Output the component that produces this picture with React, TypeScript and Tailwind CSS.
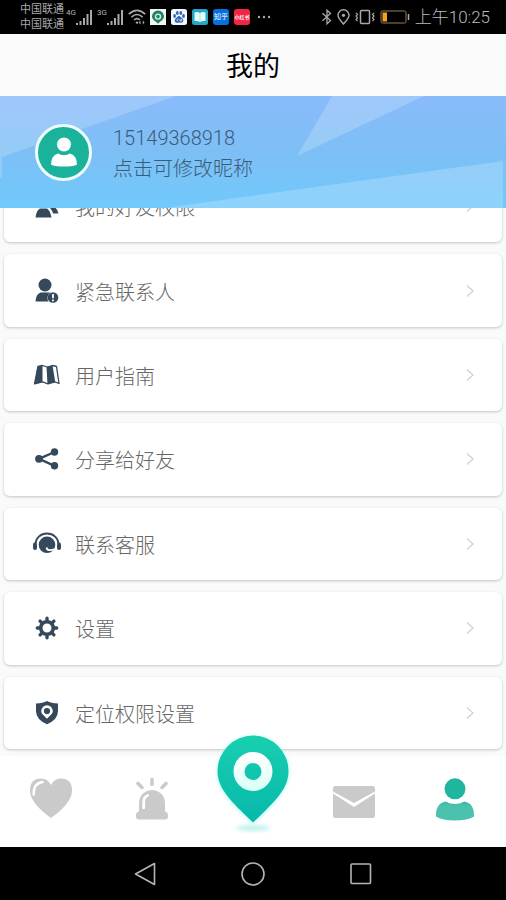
import type { ReactNode } from "react";

function Signal({ label }: { label: string }) {
  return (
    <div className="flex h-5 items-start">
      <span className="w-[10px] text-[8px] leading-[12px] text-[#b4b4b4]">{label}</span>
      <svg width="17" height="16" viewBox="0 0 17 16" className="mt-[3px]" fill="#a9a9a9" aria-hidden="true">
        <rect x="0" y="13" width="2" height="2" />
        <rect x="3.5" y="11" width="2" height="4" />
        <rect x="7" y="8" width="2" height="7" />
        <rect x="10.5" y="4" width="2" height="11" />
        <rect x="14" y="0" width="2" height="15" />
      </svg>
    </div>
  );
}

function StatusBar() {
  return (
    <div className="flex h-[34px] shrink-0 items-center justify-between bg-black pl-5 pr-4 text-[#a9a9a9]">
      <div className="flex items-center gap-1">
        <div className="-mr-[2px] text-[11px] leading-[15px]">
          <p>中国联通</p>
          <p>中国联通</p>
        </div>
        <Signal label="4G" />
        <Signal label="3G" />
        <svg width="18" height="18" viewBox="0 0 18 18" fill="none" stroke="#a9a9a9" strokeWidth="1.6" aria-hidden="true">
          <path d="M.8 6.2Q9-1.6 17.2 6.2M3.4 9.2Q9 3.8 14.6 9.2M6 12Q9 9.2 12 12" />
          <circle cx="9" cy="14.6" r="1.2" fill="#a9a9a9" stroke="none" />
          <path d="m12.5 12.5-1.8 2 1.8 2zM14.8 12.5l1.8 2-1.8 2z" fill="#a9a9a9" stroke="none" />
        </svg>
        <div className="flex items-center gap-[5px]">
          <svg width="16" height="16" viewBox="0 0 16 16" aria-hidden="true">
            <rect width="16" height="16" fill="#f2f7f3" />
            <path d="M8 1.6a6 6 0 0 1 6 6c0 2.600-2.400 4-6 7.200-3.600-3.200-6-4.600-6-7.200a6 6 0 0 1 6-6z" fill="#238463" />
            <circle cx="8" cy="7.6" r="2.5" fill="none" stroke="#d5eee4" strokeWidth="1.4" />
          </svg>
          <svg width="16" height="16" viewBox="0 0 16 16" aria-hidden="true">
            <rect width="16" height="16" rx="2.5" fill="#f3f6fb" />
            <g fill="#3468ba">
              <ellipse cx="3.6" cy="7" rx="1.4" ry="1.9" />
              <ellipse cx="6.3" cy="4" rx="1.4" ry="1.9" />
              <ellipse cx="9.8" cy="4" rx="1.4" ry="1.9" />
              <ellipse cx="12.5" cy="7" rx="1.4" ry="1.9" />
              <path d="M8 7c1.600 0 2.100 1.600 3.300 2.600 1.600 1.300 1.300 4-.8 4.100-1 0-1.600-.3-2.500-.3s-1.500.3-2.500.3c-2.100-.1-2.400-2.800-.8-4.100C5.900 8.600 6.400 7 8 7z" />
            </g>
            <path d="M6.200 10.300v1.800M7.600 10.300h-1.400M9 10v2.100h1.500V10" stroke="#f3f6fb" strokeWidth=".7" fill="none" />
          </svg>
          <svg width="16" height="16" viewBox="0 0 16 16" aria-hidden="true">
            <rect width="16" height="16" rx="2.5" fill="#27a6c4" />
            <path d="M2.500 3.500Q5.500 2.500 8 4q2.500-1.500 5.500-.5v8.500Q10.500 11.500 8 13q-2.500-1.500-5.500-1z" fill="#e5f8fa" />
            <path d="M8 4v9" stroke="#9bd7e0" strokeWidth=".7" />
          </svg>
          <span className="flex size-4 items-center justify-center overflow-hidden rounded-[3px] bg-[#0670df] text-[7px] leading-4 text-white">知乎</span>
          <span className="flex size-4 items-center justify-center overflow-hidden rounded-[3px] bg-[#f32444] text-[5px] font-bold leading-4 text-white">小红书</span>
          <svg width="16" height="4" viewBox="0 0 16 4" fill="#a9a9a9" aria-hidden="true">
            <circle cx="4" cy="2" r="1.200" />
            <circle cx="9" cy="2" r="1.200" />
            <circle cx="14" cy="2" r="1.200" />
          </svg>
        </div>
      </div>
      <div className="flex items-center gap-[5px]">
        <svg width="10" height="16" viewBox="0 0 10 16" fill="none" stroke="#a9a9a9" strokeWidth="1.300" aria-hidden="true">
          <path d="m.5 4.200 8 7.300L5 14.800V1.200l3.500 3.300-8 7.300" />
        </svg>
        <svg width="13" height="16" viewBox="0 0 13 16" fill="none" stroke="#a9a9a9" strokeWidth="1.400" aria-hidden="true">
          <path d="M6.500 15C3.500 11.500 1 9.300 1 6.300a5.500 5.500 0 0 1 11 0c0 3-2.500 5.200-5.500 8.700z" />
          <circle cx="6.500" cy="6.300" r="1.600" fill="#a9a9a9" stroke="none" />
        </svg>
        <svg width="20" height="16" viewBox="0 0 20 16" fill="none" stroke="#a9a9a9" strokeWidth="1.500" aria-hidden="true">
          <rect x="5.500" y="1.500" width="9" height="13" rx="1" />
          <path d="M1 4l1.500 1.300L1 7l1.500 1.700L1 10.400l1.500 1.600M19 4l-1.500 1.300L19 7l-1.500 1.700 1.500 1.700-1.500 1.600" strokeWidth="1.200" />
        </svg>
        <svg width="30" height="14" viewBox="0 0 30 14" aria-hidden="true">
          <rect x="1" y="1" width="25" height="12" rx="1.500" fill="none" stroke="#9b7d58" />
          <rect x="2.500" y="2.500" width="4.500" height="9" fill="#f5a023" />
          <path d="M28.500 4v6" stroke="#a9a9a9" strokeWidth="1.500" />
        </svg>
        <time className="whitespace-nowrap text-[17px] font-light leading-5 text-[#bcbcbc]">上午10:25</time>
      </div>
    </div>
  );
}

function RowIcon({ children }: { children: ReactNode }) {
  return (
    <svg width="30" height="28" viewBox="0 0 30 28" fill="#35495b" className="shrink-0" aria-hidden="true">
      {children}
    </svg>
  );
}

const rows: { label: string; icon: ReactNode }[] = [
  {
    label: "我的好友权限",
    icon: (
      <>
        <circle cx="12" cy="8" r="6" />
        <path d="M3.500 25.500Q4.500 18 8 16.500h7q3 1.500 4.500 9z" />
        <circle cx="20" cy="9" r="5" />
        <path d="M17 15h5q3.500 1.500 4.500 6.500h-5.500q-1-4-4-6.500z" />
      </>
    ),
  },
  {
    label: "紧急联系人",
    icon: (
      <>
        <circle cx="13" cy="8" r="6.500" />
        <path d="M3.500 24.500q.5-7.500 5-9h10q-3 2-3 5.500 0 2 1 3.500z" />
        <circle cx="21" cy="20.500" r="5.300" />
        <path d="M21 17v4.200M21 22.500v1.700" stroke="white" strokeWidth="1.800" />
      </>
    ),
  },
  {
    label: "用户指南",
    icon: (
      <>
        <path d="M5.500 5.500 10.500 4.300v16.500L2.500 23z" />
        <path d="m14.500 6 6-1.700 2.700 16.500L15.500 23z" />
        <path d="M6 5.500 10.500 4.500 15.500 6l5-1.500 4 1L27 22.500l-4-1.700-7 2-5.500-2-8 2z" fill="none" stroke="#35495b" strokeWidth="1.300" strokeLinejoin="round" />
      </>
    ),
  },
  {
    label: "分享给好友",
    icon: (
      <>
        <path d="M22.500 7 7 13.800 22.500 20.800" fill="none" stroke="#35495b" strokeWidth="2.400" />
        <circle cx="22.500" cy="7" r="3.700" />
        <circle cx="7" cy="13.800" r="3.900" />
        <circle cx="22.500" cy="20.800" r="3.700" />
      </>
    ),
  },
  {
    label: "联系客服",
    icon: (
      <>
        <path d="M3.500 14A11.500 10.500 0 0 1 26.500 14" fill="none" stroke="#35495b" strokeWidth="1.800" />
        <rect x="1" y="12.500" width="4" height="7.500" rx="2" />
        <rect x="25" y="12.500" width="4" height="7.500" rx="2" />
        <circle cx="15" cy="14.800" r="8.300" />
        <path d="M14.500 17.500q.5 3 4 2.600l6.500-1.300" fill="none" stroke="white" strokeWidth="1.800" />
      </>
    ),
  },
  {
    label: "设置",
    icon: (
      <>
        <path d="M15 4.300V7M15 21v2.700M5.300 14H8M22 14h2.700M8.100 7.100l2 2M19.900 18.900l2 2M21.900 7.100l-2 2M10.100 18.900l-2 2" stroke="#35495b" strokeWidth="3.400" strokeLinecap="round" />
        <circle cx="15" cy="14" r="6.300" fill="white" stroke="#35495b" strokeWidth="3.600" />
      </>
    ),
  },
  {
    label: "定位权限设置",
    icon: (
      <>
        <path d="M15 2Q19 4.300 26 4.500V12q0 8.500-11 13.300Q4 20.500 4 12V4.500Q11 4.300 15 2z" />
        <path d="M15 6.300a5.800 5.800 0 0 1 5.800 5.800c0 2.700-2.300 4.100-5.800 7.600-3.500-3.500-5.800-4.900-5.800-7.600A5.800 5.800 0 0 1 15 6.300z" fill="white" />
        <circle cx="15" cy="12" r="3.100" />
      </>
    ),
  },
];

function MenuRow({ label, icon }: { label: string; icon: ReactNode }) {
  return (
    <li className="flex">
      <button className="flex w-full items-center rounded-md bg-white pl-7 pr-[27px] text-left shadow-[0_1px_3px_rgba(0,0,0,0.22)]">
        <RowIcon>{icon}</RowIcon>
        <span className="ml-[13px] flex-1 pt-1 text-[20px] font-light leading-7 text-[#666]">{label}</span>
        <svg width="10" height="14" viewBox="0 0 10 14" fill="none" stroke="#d2d2d2" strokeWidth="1.300" aria-hidden="true">
          <path d="m2 1.500 6 5.500-6 5.500" />
        </svg>
      </button>
    </li>
  );
}

function Profile() {
  return (
    <section className="relative z-10 flex h-28 shrink-0 items-center bg-linear-to-b from-[#89bbfa] via-[#7dbff5] to-[#70c9fc] pl-[35px]">
      <svg className="absolute inset-0 size-full" viewBox="0 0 506 112" preserveAspectRatio="none" aria-hidden="true">
        <path d="M0 0H176L2 61V81L0 82z" fill="white" fillOpacity=".19" />
        <path d="M332 0H424L297 60z" fill="white" fillOpacity=".2" />
        <path d="M503 65V112H165z" fill="white" fillOpacity=".2" />
      </svg>
      <button className="relative flex size-[57px] items-center justify-center overflow-hidden rounded-full border-[3px] border-[#effcfc] bg-[#1ab29a]" aria-label="头像">
        <svg width="52" height="52" viewBox="0 0 52 52" fill="white" className="shrink-0" aria-hidden="true">
          <circle cx="26" cy="18.500" r="7" />
          <path d="M13 38.500q0-9 7-11Q26 31 32 27.500q7 2 7 11-3 2-13 2t-13-2z" />
        </svg>
      </button>
      <button className="relative ml-[21px] pt-1 text-left text-[20px] font-light leading-[31px] text-[#3b5c78]">
        <span className="block">15149368918</span>
        <span className="block">点击可修改昵称</span>
      </button>
    </section>
  );
}

function TabBar() {
  return (
    <nav className="relative z-10 grid h-[91px] shrink-0 grid-cols-5 bg-white pb-1">
      <button className="flex items-center justify-center" aria-label="关注">
        <svg width="44" height="44" viewBox="0 0 44 44" aria-hidden="true">
          <path d="M22 40Q1 25 1 12.500 1 .5 12 .5q7 0 10 6.500Q25 .5 32 .5q11 0 11 12Q43 25 22 40z" fill="#cacaca" />
          <path d="M4.700 16.500Q4.200 5.500 13.500 4" fill="none" stroke="white" strokeWidth="2.500" strokeLinecap="round" />
        </svg>
      </button>
      <button className="flex items-center justify-center" aria-label="求助">
        <svg width="44" height="44" viewBox="0 0 44 44" fill="#cacaca" aria-hidden="true">
          <path d="M22 1.500v5M8 5.500l4 4M36 5.500l-4 4" stroke="#cacaca" strokeWidth="3.600" strokeLinecap="round" />
          <path d="M9 33.500V25a13 13 0 0 1 26 0v8.500q3 .5 3 4v1q0 3-3 3H9q-3 0-3-3v-1q0-3.500 3-4z" />
          <path d="M13.700 30V24q0-5 4-6.500" fill="none" stroke="white" strokeWidth="2.700" strokeLinecap="round" />
        </svg>
      </button>
      <button className="relative" aria-label="定位">
        <svg className="absolute -top-[25px] left-1/2 -translate-x-1/2" width="84" height="106" viewBox="0 0 84 106" aria-hidden="true">
          <defs>
            <linearGradient id="pinBody" x1="0" y1="0" x2="0" y2="1">
              <stop offset="0" stopColor="#19cfaf" />
              <stop offset="1" stopColor="#06b8ac" />
            </linearGradient>
            <linearGradient id="pinRing" x1="0" y1="0" x2="0" y2="1">
              <stop offset="0" stopColor="#ffffff" />
              <stop offset="1" stopColor="#dcfff7" />
            </linearGradient>
            <filter id="glow" x="-30%" y="-100%" width="160%" height="300%">
              <feGaussianBlur stdDeviation="2" />
            </filter>
          </defs>
          <ellipse cx="42" cy="97" rx="17" ry="2.500" fill="#b0eee8" filter="url(#glow)" />
          <path d="M42 5a36 36 0 0 1 36 36c0 17-14 31-36 52C20 72 6 58 6 41A36 36 0 0 1 42 5z" fill="#b8fff3" filter="url(#glow)" />
          <path d="M42 4.500a35.500 35.500 0 0 1 35.500 35.500C77.500 57.500 65 69.500 42 91.500 19 69.500 6.500 57.500 6.500 40A35.500 35.500 0 0 1 42 4.500z" fill="url(#pinBody)" />
          <circle cx="42" cy="40.500" r="14" fill="none" stroke="url(#pinRing)" strokeWidth="11" />
        </svg>
      </button>
      <button className="flex items-center justify-center" aria-label="消息">
        <svg width="44" height="44" viewBox="0 0 44 44" aria-hidden="true">
          <rect x="1" y="8" width="42" height="32" rx="2.500" fill="#cacaca" />
          <path d="M1 13.500 22 25 43 13.500v2L22 29 1 15.500z" fill="white" />
        </svg>
      </button>
      <button className="flex items-center justify-center" aria-label="我的" aria-current="page">
        <svg width="44" height="44" viewBox="0 0 44 44" aria-hidden="true">
          <defs>
            <linearGradient id="person" x1="0" y1="0" x2="0" y2="44" gradientUnits="userSpaceOnUse">
              <stop offset=".45" stopColor="#1fb59f" />
              <stop offset=".65" stopColor="#4ac2ae" />
            </linearGradient>
          </defs>
          <circle cx="22" cy="10.800" r="10.500" fill="url(#person)" />
          <path d="M3 38.500Q2.500 25.500 12.500 23.500 22 28.500 31.500 23.500 41.500 25.500 41 38.500 35 42.500 22 42.500T3 38.500z" fill="url(#person)" />
        </svg>
      </button>
    </nav>
  );
}

function SystemNav() {
  return (
    <div className="flex h-[53px] shrink-0 items-center justify-center gap-[84px] bg-black">
      <button aria-label="返回">
        <svg width="24" height="24" viewBox="0 0 24 24" fill="none" stroke="#b5b5b5" strokeWidth="1.600" strokeLinejoin="round" aria-hidden="true">
          <path d="M21.500 1.500v21L2.500 12z" />
        </svg>
      </button>
      <button aria-label="主屏幕">
        <svg width="24" height="24" viewBox="0 0 24 24" fill="none" stroke="#b5b5b5" strokeWidth="1.600" aria-hidden="true">
          <circle cx="12" cy="12" r="11" />
        </svg>
      </button>
      <button aria-label="最近任务">
        <svg width="24" height="24" viewBox="0 0 24 24" fill="none" stroke="#b5b5b5" strokeWidth="1.600" aria-hidden="true">
          <rect x="2" y="2" width="19.500" height="19.500" rx="1" />
        </svg>
      </button>
    </div>
  );
}

export default function App() {
  return (
    <div className="flex h-screen flex-col overflow-hidden bg-[#fafafa] font-[Roboto,'Noto_Sans_CJK_SC',sans-serif]" lang="zh-CN">
      <StatusBar />
      <header className="flex h-[62px] shrink-0 items-center justify-center bg-[#fafafa] pt-1">
        <h1 className="text-[27px] leading-9 text-black">我的</h1>
      </header>
      <Profile />
      <main className="flex min-h-0 flex-1 flex-col justify-end overflow-hidden px-1 pb-[7px]">
        <ul className="grid h-[579px] shrink-0 auto-rows-fr gap-3">
          {rows.map((row) => (
            <MenuRow key={row.label} label={row.label} icon={row.icon} />
          ))}
        </ul>
      </main>
      <TabBar />
      <SystemNav />
    </div>
  );
}
